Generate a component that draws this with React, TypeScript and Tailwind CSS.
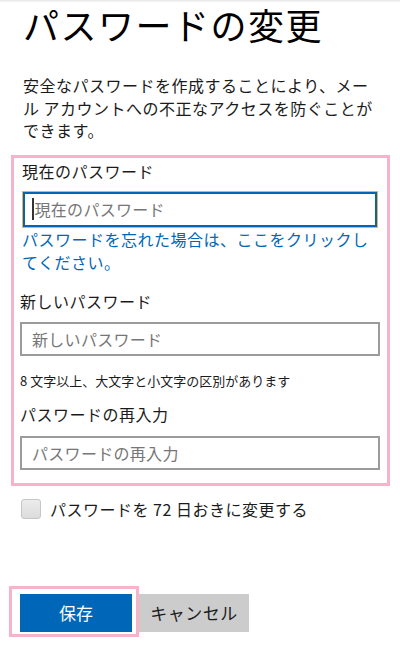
import React from 'react'

const jp = "font-['Noto_Sans_CJK_JP','Noto_Sans',sans-serif]"

function Field({ placeholder }: { placeholder: string }) {
  return (
    <div className="h-[34px] border-2 border-[#9b9b9b] bg-white flex items-center pl-[10px]">
      <span className="text-[16px] leading-none tracking-[0.3px] text-[#767676]">{placeholder}</span>
    </div>
  )
}

export default function App() {
  return (
    <div className={`${jp} w-[400px] h-[650px] bg-white text-[#1b1b1b] overflow-hidden`}>
      <div className="h-[2px] bg-gradient-to-b from-[#e6e6e6] to-[#f7f7f7]" />
      <div className="px-[20px]">
        <h1 className="pl-[3px] text-[36px] leading-[44px] tracking-[1.5px] font-normal text-black">
          パスワードの変更
        </h1>
        <p className="mt-[28px] pl-[3px] text-[16px] leading-[22.5px] tracking-[0.5px]">
          安全なパスワードを作成することにより、メー
          <br />
          ル アカウントへの不正なアクセスを防ぐことが
          <br />
          できます。
        </p>

        <div className="mt-[13px] ml-[-9px] mr-[-10px] border-[3px] border-[#f7b3ca] pl-[6px] pr-[7px] pt-[2px] pb-[13px]">
          <div className="px-[2px]">
            <label className="block text-[16px] leading-[22px] tracking-[0.5px]">現在のパスワード</label>
            <div className="mt-[9px] h-[37px] border border-[#f0b43c] bg-white">
              <div className="h-full border-2 border-[#0067b8] flex items-center pl-[7px]">
                <span className="w-[1.5px] h-[22px] bg-[#333]" />
                <span className="ml-[1px] text-[16px] leading-none tracking-[0.3px] text-[#767676]">現在のパスワード</span>
              </div>
            </div>
            <a className="block text-[16px] leading-[23px] tracking-[0.5px] text-[#0067b8] cursor-pointer">
              パスワードを忘れた場合は、ここをクリックし
              <br />
              てください。
            </a>
          </div>

          <label className="block mt-[16px] text-[16px] leading-[22px] tracking-[0.5px]">新しいパスワード</label>
          <div className="mt-[10px]">
            <Field placeholder="新しいパスワード" />
          </div>
          <p className="mt-[16px] text-[13px] leading-[18px]">8 文字以上、大文字と小文字の区別があります</p>

          <label className="block mt-[13px] text-[16px] leading-[22px] tracking-[0.5px]">パスワードの再入力</label>
          <div className="mt-[11px]">
            <Field placeholder="パスワードの再入力" />
          </div>
        </div>

        <div className="mt-[12px] flex items-center">
          <span className="ml-[1px] w-[20px] h-[20px] rounded-[3px] border border-[#c6c6c6] bg-gradient-to-b from-[#ececec] to-[#dcdcdc]" />
          <span className="ml-[9px] text-[16px] leading-[22px] tracking-[0.5px]">パスワードを 72 日おきに変更する</span>
        </div>

        <div className="mt-[66px] flex items-start">
          <div className="ml-[-11px] border-[3px] border-[#f7b3ca] pl-[8px] pr-[4px] pt-[5px] pb-[2px]">
            <button className="w-[112px] h-[38px] bg-[#0067b8] text-white text-[17px] leading-none">保存</button>
          </div>
          <button className="mt-[8px] w-[110px] h-[38px] bg-[#cccccc] text-[#1b1b1b] text-[17px] leading-none tracking-[0.5px]">
            キャンセル
          </button>
        </div>
      </div>
    </div>
  )
}
